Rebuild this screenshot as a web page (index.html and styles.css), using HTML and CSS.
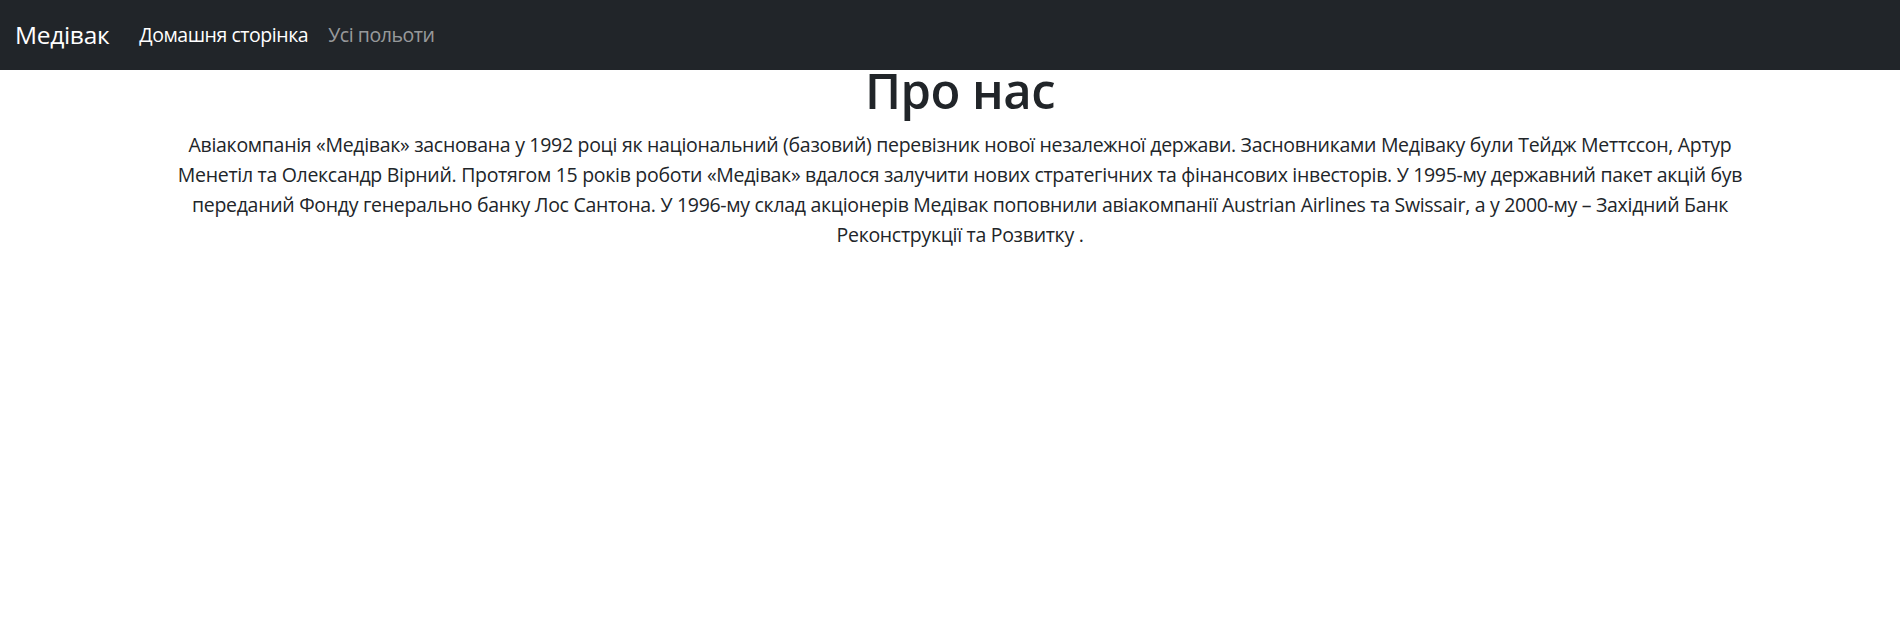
FILE: index.html
```html
<!DOCTYPE html>
<html lang="uk">
<head>
<meta charset="utf-8">
<title>Медівак</title>
<link rel="stylesheet" href="styles.css">
</head>
<body>
<nav class="navbar">
  <div class="navbar-inner">
    <a class="brand" href="#">Медівак</a>
    <ul class="nav">
      <li><a class="nav-link active" href="#">Домашня сторінка</a></li>
      <li><a class="nav-link" href="#">Усі польоти</a></li>
    </ul>
  </div>
</nav>
<main class="container">
  <h1 class="title">Про нас</h1>
  <p class="about">Авіакомпанія «Медівак» заснована у 1992 році як національний (базовий) перевізник нової незалежної держави. Засновниками Медіваку були Тейдж Меттссон, Артур Менетіл та Олександр Вірний. Протягом 15 років роботи «Медівак» вдалося залучити нових стратегічних та фінансових інвесторів. У 1995-му державний пакет акцій був переданий Фонду генерально банку Лос Сантона. У 1996-му склад акціонерів Медівак поповнили авіакомпанії Austrian Airlines та Swissair, а у 2000-му – Західний Банк Реконструкції та Розвитку .</p>
</main>
</body>
</html>
```

FILE: styles.css
```css
* { box-sizing: border-box; }
html, body { margin: 0; }
body {
  font-family: "Open Sans", "Noto Sans", sans-serif;
  font-size: 19.5px;
  line-height: 30px;
  letter-spacing: -0.3px;
  color: #212529;
  background: #fff;
  padding-top: 60px;
}
.navbar {
  position: fixed;
  top: 0;
  left: 0;
  right: 0;
  z-index: 10;
  background: #212529;
  padding: 10px 0;
}
.navbar-inner {
  display: flex;
  align-items: center;
  padding: 0 15px;
}
.brand {
  font-size: 24.5px;
  line-height: 37.5px;
  letter-spacing: -0.3px;
  padding: 6.25px 0;
  margin-right: 20px;
  color: #fff;
  text-decoration: none;
}
.nav {
  display: flex;
  list-style: none;
  margin: 0;
  padding: 0;
}
.nav-link {
  display: block;
  padding: 10px 10px;
  letter-spacing: -0.45px;
  color: rgba(255, 255, 255, 0.55);
  text-decoration: none;
}
.nav-link.active { color: #fff; }
.container {
  max-width: 1670px;
  margin: 0 auto;
  padding: 0 15px 0 35px;
}
.title {
  margin: 0 0 10px;
  font-size: 49px;
  font-weight: 600;
  line-height: 60px;
  letter-spacing: -0.5px;
  text-align: center;
}
.about {
  margin: 0 0 20px;
  text-align: center;
}
```
